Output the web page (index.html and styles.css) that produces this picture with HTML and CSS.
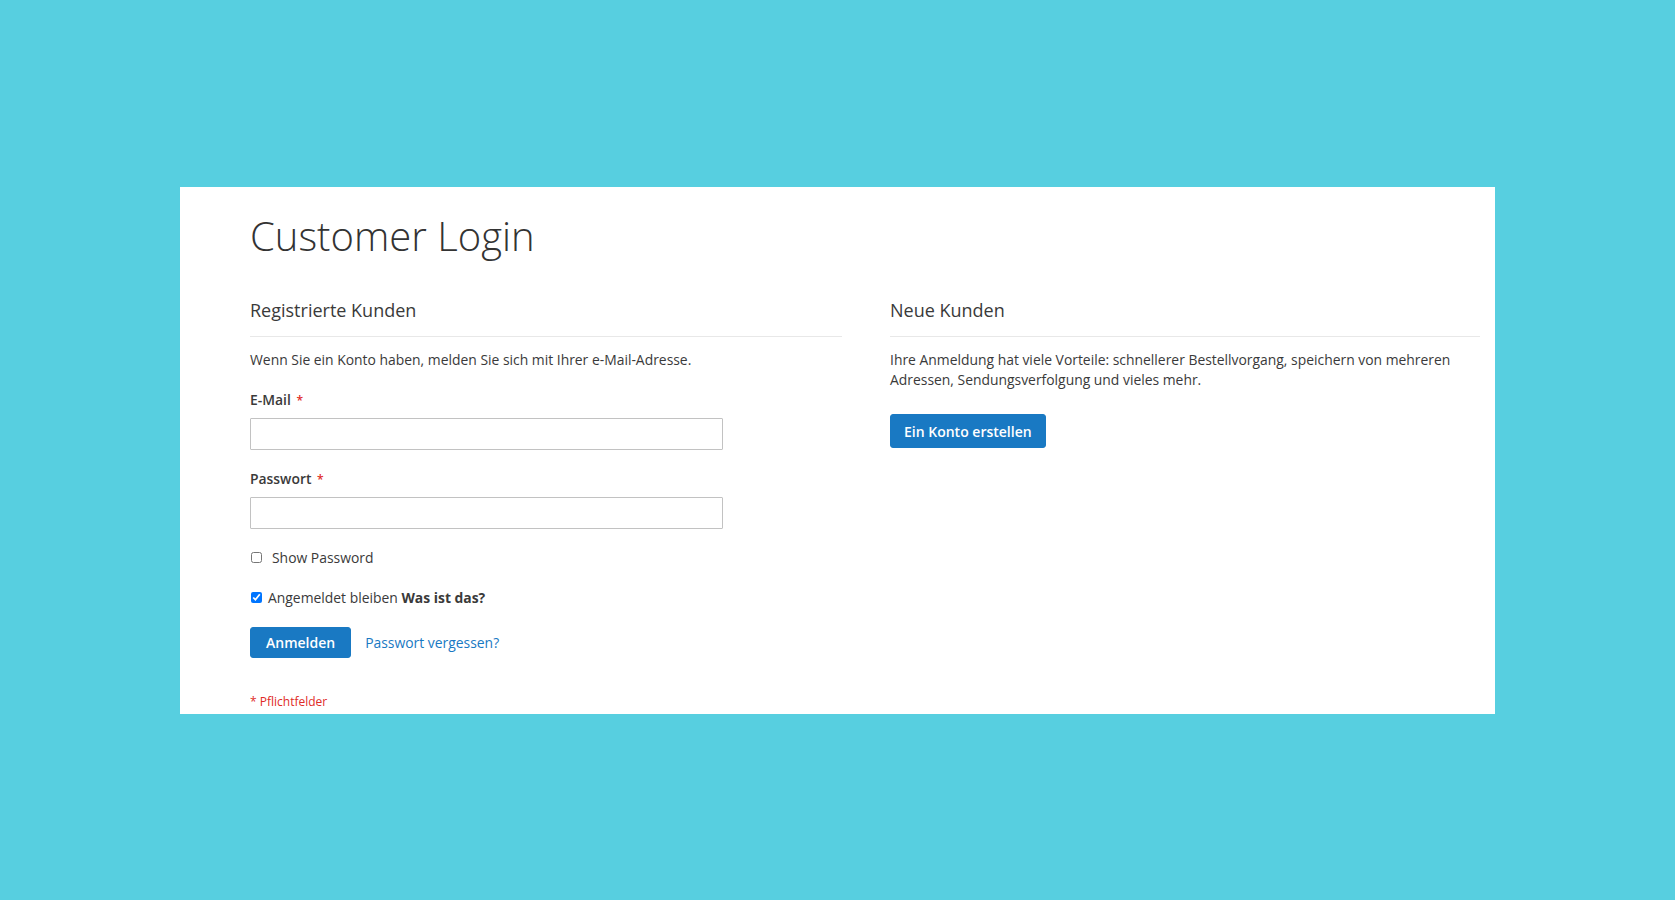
FILE: index.html
```html
<!DOCTYPE html>
<html lang="de">
<head>
<meta charset="utf-8">
<title>Customer Login</title>
<link rel="stylesheet" href="styles.css">
</head>
<body>
<main class="card">
  <h1 class="page-title">Customer Login</h1>
  <div class="columns">
    <section class="col">
      <h2 class="block-title">Registrierte Kunden</h2>
      <p class="note">Wenn Sie ein Konto haben, melden Sie sich mit Ihrer e-Mail-Adresse.</p>
      <div class="field">
        <label class="label">E-Mail <span class="req">*</span></label>
        <input class="input" type="email">
      </div>
      <div class="field">
        <label class="label">Passwort <span class="req">*</span></label>
        <input class="input" type="password">
      </div>
      <label class="check check-show"><input type="checkbox"> <span>Show Password</span></label>
      <label class="check check-remember"><input type="checkbox" checked> <span>Angemeldet bleiben <b>Was ist das?</b></span></label>
      <div class="actions">
        <button class="btn">Anmelden</button>
        <a class="link" href="#">Passwort vergessen?</a>
      </div>
      <p class="required">* Pflichtfelder</p>
    </section>
    <section class="col">
      <h2 class="block-title">Neue Kunden</h2>
      <p class="note">Ihre Anmeldung hat viele Vorteile: schnellerer Bestellvorgang, speichern von mehreren Adressen, Sendungsverfolgung und vieles mehr.</p>
      <button class="btn btn-create">Ein Konto erstellen</button>
    </section>
  </div>
</main>
</body>
</html>
```
FILE: styles.css
```css
html, body {
  margin: 0;
  padding: 0;
}
body {
  background: #57cfe0;
  font-family: "Open Sans", "Liberation Sans", sans-serif;
  font-size: 13.9px;
  color: #3a3a3a;
  padding-top: 187px;
}
.card {
  display: block;
  background: #fff;
  margin-left: 180px;
  width: 1315px;
  height: 527px;
  box-sizing: border-box;
  padding: 25px 15px 0 70px;
  overflow: hidden;
}
.page-title {
  margin: 0;
  font-size: 40px;
  font-weight: 300;
  line-height: 1.2;
  color: #333;
}
.columns {
  display: grid;
  grid-template-columns: 592px 590px;
  column-gap: 48px;
  margin-top: 39px;
}
.block-title {
  margin: 0;
  font-size: 18px;
  font-weight: 400;
  line-height: 1.3;
  padding-bottom: 14px;
  border-bottom: 1px solid #e8e8e8;
}
.note {
  margin: 13px 0 0;
  line-height: 1.4;
}
.field {
  margin-top: 20px;
}
.field + .field {
  margin-top: 19px;
}
.label {
  display: block;
  font-weight: 600;
  margin-bottom: 9px;
}
.req {
  color: #e02b27;
  font-size: 12px;
  margin-left: 2px;
}
.input {
  display: block;
  width: 473px;
  height: 32px;
  box-sizing: border-box;
  border: 1px solid #c2c2c2;
  border-radius: 1px;
  margin: 0;
}
.check {
  display: flex;
  align-items: center;
  gap: 6px;
  margin-top: 19px;
}
.check input {
  margin: 0 0 0 1px;
  width: 11px;
  height: 11px;
}
.check-show span {
  margin-left: 4px;
}
.check-remember {
  margin-top: 21px;
}
.check b {
  font-weight: 700;
}
.actions {
  display: flex;
  align-items: center;
  gap: 14px;
  margin-top: 20px;
}
.btn {
  background: #1979c3;
  border: 1px solid #1979c3;
  color: #fff;
  font-family: inherit;
  font-size: 14px;
  font-weight: 600;
  border-radius: 3px;
  height: 31px;
  padding: 0 15px;
  margin: 0;
}
.btn-create {
  height: 34px;
  padding: 0 13px;
  margin-top: 25px;
}
.link {
  color: #1979c3;
  text-decoration: none;
}
.required {
  margin: 35px 0 0;
  color: #e02b27;
  font-size: 12px;
}
```
